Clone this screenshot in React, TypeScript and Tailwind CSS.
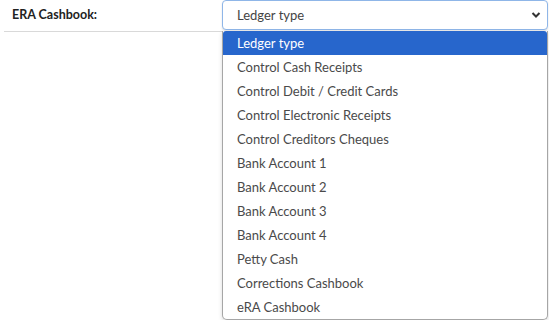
import React from "react";

const items = [
  "Control Cash Receipts",
  "Control Debit / Credit Cards",
  "Control Electronic Receipts",
  "Control Creditors Cheques",
  "Bank Account 1",
  "Bank Account 2",
  "Bank Account 3",
  "Bank Account 4",
  "Petty Cash",
  "Corrections Cashbook",
  "eRA Cashbook",
];

export default function App() {
  return (
    <div
      className="w-[549px] h-[320px] bg-white relative overflow-hidden"
      style={{ fontFamily: "Lato, 'Noto Sans', sans-serif" }}
    >
      <div className="flex items-start">
        <div className="w-[222px] shrink-0 pl-[4px]">
          <div className="h-[32px] border-b border-[#d9d9d9] flex items-center pl-[8px]">
            <span className="text-[12.5px] font-bold text-[#222]">ERA Cashbook:</span>
          </div>
        </div>
        <div className="flex-1 pr-[1px] relative">
          <div className="h-[30px] border border-[#8fb6e8] rounded-[4px] bg-white flex items-center pl-[14px] pr-[6px] shadow-[0_1px_2px_rgba(0,0,0,0.12)]">
            <span className="text-[13px] text-[#444] flex-1 pt-[1px]">Ledger type</span>
            <svg width="10" height="8" viewBox="0 0 10 8">
              <path d="M1.5 2 L5 5.5 L8.5 2" fill="none" stroke="#333" strokeWidth="2" />
            </svg>
          </div>
          <div className="absolute left-0 right-[1px] top-[31px] bg-white border border-[#a6a6a6] border-t-0 rounded-b-[5px] shadow-[0_2px_4px_rgba(0,0,0,0.15)] flex flex-col">
            <div className="h-[24px] bg-[#2766cc] text-white text-[13px] flex items-center pl-[14px] pt-[1px] rounded-t-[3px]">
              Ledger type
            </div>
            {items.map((t) => (
              <div key={t} className="h-[24px] text-[13px] text-[#4a4a4a] flex items-center pl-[14px] pt-[1px]">
                {t}
              </div>
            ))}
          </div>
        </div>
      </div>
    </div>
  );
}
